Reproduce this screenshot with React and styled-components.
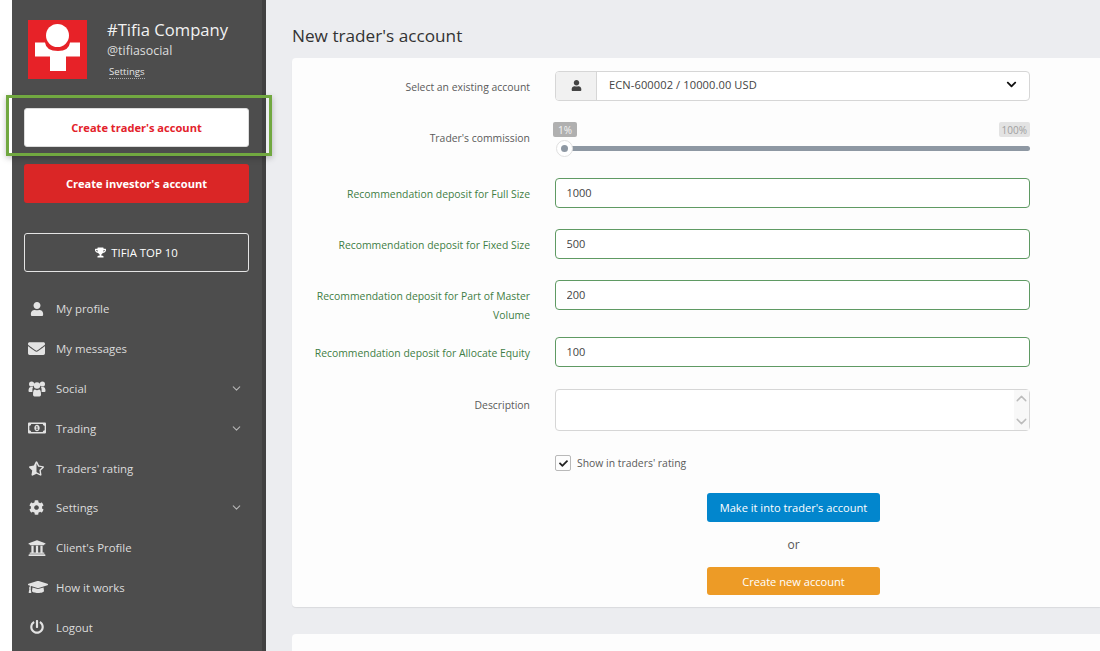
import styled, { createGlobalStyle } from "styled-components";
import {
  FaUser,
  FaEnvelope,
  FaRegMoneyBillAlt,
  FaStarHalfAlt,
  FaCog,
  FaUniversity,
  FaGraduationCap,
  FaPowerOff,
  FaTrophy,
  FaCheck,
  FaChevronDown,
} from "react-icons/fa";
import { FiChevronDown, FiChevronUp } from "react-icons/fi";

const GlobalStyle = createGlobalStyle`
  html, body {
    margin: 0;
    height: 100%;
    overflow: hidden;
    background: #ffffff;
    font-family: "Open Sans", "Liberation Sans", sans-serif;
  }
  * { box-sizing: border-box; }
`;

const Page = styled.div`
  display: flex;
  height: 651px;
  padding-left: 12px;
  position: relative;
  overflow: hidden;
`;

const Sidebar = styled.aside`
  width: 254px;
  flex: none;
  background: #4d4d4d;
  border-right: 4px solid #414141;
  padding: 20px 0 0 12px;
`;

const Brand = styled.div`
  display: flex;
  gap: 20px;
  height: 88px;
  padding-left: 4px;
`;

const Logo = styled.svg`
  width: 59px;
  height: 59px;
  flex: none;
`;

const BrandText = styled.div`
  display: flex;
  flex-direction: column;
  align-items: flex-start;
  color: #f2f2f2;
`;

const BrandName = styled.div`
  font-size: 16.6px;
  line-height: 20px;
`;

const BrandHandle = styled.div`
  font-size: 12.4px;
  line-height: 20px;
  color: #dddddd;
  margin-top: 1px;
`;

const BrandLink = styled.a`
  font-size: 9.6px;
  line-height: 13px;
  margin: 4px 0 0 2px;
  color: #e6e6e6;
  border-bottom: 1px dotted #aaaaaa;
`;

const SideButton = styled.div`
  width: 225px;
  height: ${(p) => p.$height || 39}px;
  margin-bottom: ${(p) => p.$after || 0}px;
  display: flex;
  align-items: center;
  justify-content: center;
  gap: 5px;
  padding-bottom: ${(p) => (p.$variant === "outline" ? 1 : 0)}px;
  border-radius: 3px;
  font-size: ${(p) => (p.$variant === "outline" ? 11.4 : 11.1)}px;
  font-weight: ${(p) => (p.$variant === "outline" ? 400 : 700)};
  color: ${(p) => (p.$variant === "white" ? "#e3222b" : "#ffffff")};
  background: ${(p) =>
    p.$variant === "white"
      ? "#ffffff"
      : p.$variant === "red"
      ? "#da2626"
      : "transparent"};
  border: ${(p) =>
    p.$variant === "outline"
      ? "1px solid #e4e4e4"
      : p.$variant === "white"
      ? "1px solid #dcdcdc"
      : "none"};
`;

const Highlight = styled.div`
  position: absolute;
  left: 6px;
  top: 95px;
  width: 266px;
  height: 61px;
  border: 3px solid #71a840;
  box-shadow: 0 2px 6px rgba(0, 0, 0, 0.25);
  pointer-events: none;
`;

const Nav = styled.nav`
  margin-top: 17px;
  display: flex;
  flex-direction: column;
`;

const NavItem = styled.div`
  display: flex;
  align-items: center;
  width: 225px;
  height: 39.8px;
  padding-left: 4px;
  font-size: 11.4px;
  color: #dcdcdc;
`;

const NavIcon = styled.span`
  width: 28px;
  flex: none;
  display: flex;
  align-items: center;
  color: #e3e3e3;
  font-size: ${(p) => p.$size || 16}px;
  padding-left: ${(p) => p.$pad || 0}px;
`;

const NavLabel = styled.span`
  flex: 1;
`;

const NavCaret = styled(FiChevronDown)`
  font-size: 13px;
  margin-right: 6px;
  color: #b5b5b5;
`;

const Main = styled.main`
  flex: 1;
  min-width: 0;
  background: #ecedf0;
  padding-left: 26px;
`;

const Title = styled.h1`
  margin: 0;
  height: 58px;
  padding-top: 25px;
  font-size: 17.2px;
  line-height: 22px;
  font-weight: 400;
  color: #333333;
`;

const Card = styled.section`
  background: #fdfdfd;
  border-radius: 4px 0 0 4px;
  height: 549px;
  padding: 13px 0 0;
  box-shadow: 0 1px 1px rgba(0, 0, 0, 0.08);
`;

const NextCard = styled.div`
  background: #fdfdfd;
  border-radius: 4px 0 0 0;
  height: 40px;
  margin-top: 27px;
`;

const Row = styled.div`
  display: grid;
  grid-template-columns: 238px 475px;
  column-gap: 25px;
  margin-bottom: ${(p) => p.$after ?? 21}px;
`;

const Label = styled.label`
  font-size: 10.4px;
  line-height: 19px;
  padding-top: 7px;
  height: ${(p) => (p.$tall ? "36px" : "auto")};
  text-align: right;
  color: ${(p) => (p.$ok ? "#3f7d45" : "#5b5b5b")};
`;

const SelectBox = styled.div`
  display: flex;
  height: 30px;
  border: 1px solid #d6d6d6;
  border-radius: 4px;
  background: #ffffff;
  overflow: hidden;
`;

const SelectAddon = styled.div`
  width: 41px;
  flex: none;
  display: flex;
  align-items: center;
  justify-content: center;
  padding-bottom: 2px;
  background: #f1f1f1;
  border-right: 1px solid #d6d6d6;
  color: #444444;
  font-size: 11px;
`;

const SelectValue = styled.div`
  flex: 1;
  display: flex;
  align-items: center;
  justify-content: space-between;
  padding: 0 12px 3px 12px;
  font-size: 11.1px;
  color: #444444;
  letter-spacing: 0.1px;
`;

const Slider = styled.div`
  position: relative;
  height: 29px;
`;

const SliderBadges = styled.div`
  display: flex;
  justify-content: space-between;
  margin-left: -2px;
`;

const SliderBadge = styled.span`
  height: 15px;
  padding: 0 ${(p) => (p.$min ? 5 : 3)}px;
  border-radius: 2px;
  font-size: 10px;
  line-height: 16px;
  background: ${(p) => (p.$min ? "#b0b0b0" : "#e3e3e3")};
  color: ${(p) => (p.$min ? "#f4f4f4" : "#a0a0a0")};
`;

const SliderTrack = styled.div`
  height: 5px;
  margin: 9px 0 0 3px;
  border-radius: 3px;
  background: #8e98a3;
`;

const SliderThumb = styled.div`
  position: absolute;
  left: 1px;
  top: 18px;
  width: 17px;
  height: 17px;
  border-radius: 50%;
  background: #ffffff;
  border: 1px solid #e0e0e0;
  display: flex;
  align-items: center;
  justify-content: center;

  &::after {
    content: "";
    width: 7px;
    height: 7px;
    border-radius: 50%;
    background: #8e98a3;
  }
`;

const TextInput = styled.input`
  display: block;
  width: 100%;
  height: 30px;
  padding: 0 10.5px 1px;
  border: 1px solid #5f9a63;
  border-radius: 4px;
  outline: none;
  background: #ffffff;
  font-family: inherit;
  font-size: 11px;
  color: #444444;
`;

const TextAreaWrap = styled.div`
  position: relative;
  height: 42px;
`;

const TextArea = styled.textarea`
  display: block;
  width: 100%;
  height: 100%;
  border: 1px solid #d6d6d6;
  border-radius: 4px;
  outline: none;
  resize: none;
  background: #ffffff;
`;

const ScrollStrip = styled.div`
  position: absolute;
  top: 1px;
  right: 1px;
  bottom: 1px;
  width: 15px;
  background: #f8f8f8;
  display: flex;
  flex-direction: column;
  align-items: center;
  justify-content: space-between;
  font-size: 17px;
  color: #bcbcbc;
`;

const CheckRow = styled.div`
  display: flex;
  align-items: center;
  gap: 6px;
  height: 16px;
  font-size: 10.4px;
  color: #5b5b5b;
`;

const CheckBox = styled.span`
  width: 16px;
  height: 16px;
  display: flex;
  align-items: center;
  justify-content: center;
  border: 1px solid #b9b9b9;
  border-radius: 2px;
  font-size: 9px;
  color: #222222;
`;

const Actions = styled.div`
  display: flex;
  flex-direction: column;
  align-items: center;
  width: 475px;
  margin-left: 264px;
  margin-top: 22px;
`;

const ActionButton = styled.div`
  width: 173px;
  height: ${(p) => (p.$orange ? 28 : 29)}px;
  display: flex;
  align-items: center;
  justify-content: center;
  border-radius: 3px;
  font-size: 11.1px;
  color: #ffffff;
  background: ${(p) => (p.$orange ? "#ed9b26" : "#0286cd")};
`;

const OrText = styled.div`
  height: 45px;
  line-height: 45px;
  font-size: 12px;
  color: #555555;
`;

const UsersIcon = () => (
  <svg width="18" height="17" viewBox="0 0 18 17" fill="currentColor">
    <circle cx="3.6" cy="4" r="2.6" />
    <circle cx="14.4" cy="4" r="2.6" />
    <path d="M0.5 11 Q0.5 7 3 7 L5 7 Q4 9 4.4 12 L1.5 12 Q0.5 12 0.5 11 Z" />
    <path d="M17.5 11 Q17.5 7 15 7 L13 7 Q14 9 13.6 12 L16.5 12 Q17.5 12 17.5 11 Z" />
    <circle cx="9" cy="5.5" r="3.2" />
    <path d="M5 14.5 Q5 9.5 7 9.5 Q9 11 11 9.5 Q13 9.5 13 14.5 Q13 16.5 11.5 16.5 L6.5 16.5 Q5 16.5 5 14.5 Z" />
  </svg>
);

const navItems = [
  { label: "My profile", icon: <FaUser />, pad: 2, size: 14 },
  { label: "My messages", icon: <FaEnvelope />, size: 17 },
  { label: "Social", icon: <UsersIcon />, caret: true },
  { label: "Trading", icon: <FaRegMoneyBillAlt />, caret: true, size: 18 },
  { label: "Traders' rating", icon: <FaStarHalfAlt />, pad: 1, size: 15 },
  { label: "Settings", icon: <FaCog />, caret: true, pad: 1, size: 15 },
  { label: "Client's Profile", icon: <FaUniversity />, size: 18 },
  { label: "How it works", icon: <FaGraduationCap />, size: 20 },
  { label: "Logout", icon: <FaPowerOff />, pad: 2, size: 14 },
];

const deposits = [
  { label: "Recommendation deposit for Full Size", value: "1000" },
  { label: "Recommendation deposit for Fixed Size", value: "500" },
  {
    label: "Recommendation deposit for Part of Master Volume",
    value: "200",
    tall: true,
  },
  { label: "Recommendation deposit for Allocate Equity", value: "100", after: 22 },
];

const App = () => {
  return (
    <>
      <GlobalStyle />
      <Page>
        <Sidebar>
          <Brand>
            <Logo viewBox="0 0 59 59">
              <rect width="59" height="59" fill="#e72228" />
              <circle cx="29.5" cy="15.5" r="11.5" fill="#ffffff" />
              <path
                d="M7 22.5 L17 22.5 Q18 31 30 31 Q41 31 42 22.5 L52 22.5 L52 36.5 L38 36.5 L38 51 L22 51 L22 36.5 L7 36.5 Z"
                fill="#ffffff"
              />
            </Logo>
            <BrandText>
              <BrandName>#Tifia Company</BrandName>
              <BrandHandle>@tifiasocial</BrandHandle>
              <BrandLink>Settings</BrandLink>
            </BrandText>
          </Brand>
          <SideButton $variant="white" $after={17}>
            Create trader's account
          </SideButton>
          <SideButton $variant="red" $after={30}>
            Create investor's account
          </SideButton>
          <SideButton $variant="outline">
            <FaTrophy size={11} />
            TIFIA TOP 10
          </SideButton>
          <Nav>
            {navItems.map((item) => (
              <NavItem key={item.label}>
                <NavIcon $size={item.size} $pad={item.pad}>
                  {item.icon}
                </NavIcon>
                <NavLabel>{item.label}</NavLabel>
                {item.caret && <NavCaret />}
              </NavItem>
            ))}
          </Nav>
        </Sidebar>
        <Main>
          <Title>New trader's account</Title>
          <Card>
            <Row>
              <Label>Select an existing account</Label>
              <SelectBox>
                <SelectAddon>
                  <FaUser />
                </SelectAddon>
                <SelectValue>
                  ECN-600002 / 10000.00 USD
                  <FaChevronDown size={11} color="#111111" />
                </SelectValue>
              </SelectBox>
            </Row>
            <Row $after={27}>
              <Label>Trader's commission</Label>
              <Slider>
                <SliderBadges>
                  <SliderBadge $min>1%</SliderBadge>
                  <SliderBadge>100%</SliderBadge>
                </SliderBadges>
                <SliderTrack />
                <SliderThumb />
              </Slider>
            </Row>
            {deposits.map((item) => (
              <Row key={item.value} $after={item.after}>
                <Label $ok $tall={item.tall}>
                  {item.label}
                </Label>
                <TextInput defaultValue={item.value} />
              </Row>
            ))}
            <Row $after={24}>
              <Label>Description</Label>
              <TextAreaWrap>
                <TextArea />
                <ScrollStrip>
                  <FiChevronUp />
                  <FiChevronDown />
                </ScrollStrip>
              </TextAreaWrap>
            </Row>
            <Row $after={0}>
              <span />
              <CheckRow>
                <CheckBox>
                  <FaCheck />
                </CheckBox>
                Show in traders' rating
              </CheckRow>
            </Row>
            <Actions>
              <ActionButton>Make it into trader's account</ActionButton>
              <OrText>or</OrText>
              <ActionButton $orange>Create new account</ActionButton>
            </Actions>
          </Card>
          <NextCard />
        </Main>
        <Highlight />
      </Page>
    </>
  );
};

export default App;
